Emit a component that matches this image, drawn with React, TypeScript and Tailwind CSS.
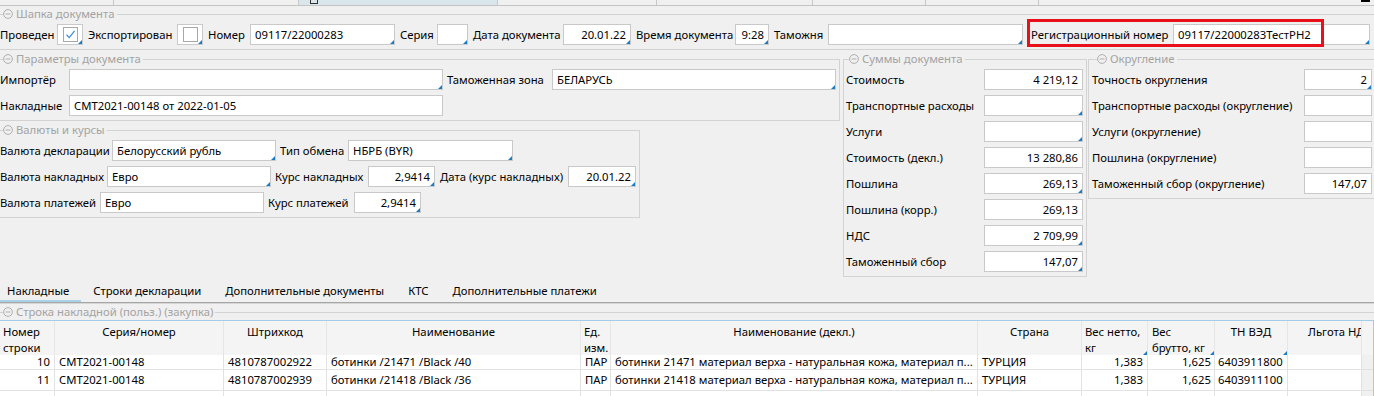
import type { ReactNode } from "react";
import { clsx } from "clsx";

function Corner() {
  return (
    <span
      aria-hidden
      className="absolute bottom-0 right-0 h-0 w-0 border-b-[4px] border-l-[4px] border-b-[#1b7cc4] border-l-transparent"
    />
  );
}

function Field({
  className,
  value,
  right,
  corner,
}: {
  className: string;
  value?: string;
  right?: boolean;
  corner?: boolean;
}) {
  return (
    <div
      className={clsx(
        "relative flex h-[21px] shrink-0 items-center overflow-hidden whitespace-nowrap border border-[#c9c9c9] bg-white",
        right ? "justify-end pr-[4px]" : "pl-[4px]",
        className,
      )}
    >
      {value}
      {corner && <Corner />}
    </div>
  );
}

function Check({ on }: { on?: boolean }) {
  return (
    <div className="relative flex h-[21px] w-[26px] shrink-0 items-center justify-center border border-[#c9c9c9] bg-white">
      <span className="flex h-[15px] w-[15px] items-center justify-center border border-[#a8a8a8] bg-white">
        {on && (
          <svg width="11" height="11" viewBox="0 0 11 11">
            <path d="M1.5 5.8 L4.2 8.6 L9.6 1.8" fill="none" stroke="#3d8fe0" strokeWidth="1.3" />
          </svg>
        )}
      </span>
      <Corner />
    </div>
  );
}

function Lbl({ className, children }: { className?: string; children: ReactNode }) {
  return <span className={clsx("shrink-0 whitespace-nowrap", className)}>{children}</span>;
}

function Legend({ title, className }: { title: string; className?: string }) {
  return (
    <legend className={clsx("pr-[2px] text-[#a3a3a3]", className)}>
      <span className="flex items-center gap-[3px]">
        <svg width="10" height="10" viewBox="0 0 10 10">
          <circle cx="5" cy="5" r="4.4" fill="none" stroke="#a8a8a8" strokeWidth="0.9" />
          <path d="M2.6 5h4.8" stroke="#a8a8a8" strokeWidth="0.9" />
        </svg>
        {title}
      </span>
    </legend>
  );
}

const sums: [string, string, boolean][] = [
  ["Стоимость", "4 219,12", false],
  ["Транспортные расходы", "", true],
  ["Услуги", "", true],
  ["Стоимость (декл.)", "13 280,86", false],
  ["Пошлина", "269,13", true],
  ["Пошлина (корр.)", "269,13", false],
  ["НДС", "2 709,99", true],
  ["Таможенный сбор", "147,07", true],
];

const rounding: [string, string, boolean][] = [
  ["Точность округления", "2", true],
  ["Транспортные расходы (округление)", "", false],
  ["Услуги (округление)", "", false],
  ["Пошлина (округление)", "", false],
  ["Таможенный сбор (округление)", "147,07", false],
];

const topTabs = ["w-[114px]", "w-[185px]", "w-[199px] bg-[#d9e6ec]", "w-[159px]", "w-[156px]", "w-[113px]", "w-[113px]"];

const bottomTabs = ["Накладные", "Строки декларации", "Дополнительные документы", "КТС", "Дополнительные платежи"];

type Col = { w: string; title: string; head: string; cell: string; corner?: boolean };

const cols: Col[] = [
  { w: "w-[55px]", title: "Номер\nстроки", head: "pl-[3px] text-left", cell: "justify-end pr-[4px]" },
  { w: "w-[169px]", title: "Серия/номер", head: "text-center", cell: "pl-[4px]" },
  { w: "w-[103px]", title: "Штрихкод", head: "text-center", cell: "pl-[4px]" },
  { w: "w-[254px]", title: "Наименование", head: "text-center", cell: "pl-[4px]" },
  { w: "w-[30px]", title: "Ед.\nизм.", head: "pl-[3px] text-left", cell: "pl-[4px]" },
  { w: "w-[367px]", title: "Наименование (декл.)", head: "text-center", cell: "pl-[4px]" },
  { w: "w-[104px]", title: "Страна", head: "text-center", cell: "pl-[4px]" },
  { w: "w-[66px]", title: "Вес нетто,\nкг", head: "pl-[3px] text-left", cell: "justify-end pr-[4px]", corner: true },
  { w: "w-[67px]", title: "Вес\nбрутто, кг", head: "pl-[4px] text-left", cell: "justify-end pr-[3px]", corner: true },
  { w: "w-[73px]", title: "ТН ВЭД", head: "text-center", cell: "pl-[3px]", corner: true },
  { w: "w-[74px]", title: "Льгота НДС", head: "pl-[20px] text-left", cell: "bg-[#d4fad4]" },
];

const rows = [
  ["10", "CMT2021-00148", "4810787002922", "ботинки /21471 /Black /40", "ПАР", "ботинки 21471 материал верха - натуральная кожа, материал п...", "ТУРЦИЯ", "1,383", "1,625", "6403911800", ""],
  ["11", "CMT2021-00148", "4810787002939", "ботинки /21418 /Black /36", "ПАР", "ботинки 21418 материал верха - натуральная кожа, материал п...", "ТУРЦИЯ", "1,383", "1,625", "6403911100", ""],
  ["", "", "", "", "", "", "", "", "", "", ""],
];

export default function App() {
  return (
    <div className="relative h-[396px] w-[1374px] overflow-hidden bg-[#f0f0f0] font-['Noto_Sans'] text-[11.3px] leading-[16px] text-black">
      {/* обрезанные вкладки документа */}
      <div className="relative flex h-[6px] border-b border-[#c4c4c4]">
        {topTabs.map((t, i) => (
          <div key={i} className={clsx("relative h-full border-r border-[#c8c8c8]", t)}>
            {i === 2 && <span className="absolute left-[11px] top-[-4px] h-[8px] w-[8px] border border-[#333]" />}
          </div>
        ))}
        <span className="absolute right-[4px] top-0 h-[2px] w-[9px] bg-black" />
      </div>

      <fieldset className="border-y border-[#d3d3d3] pb-[4px]">
        <Legend title="Шапка документа" className="ml-[3px]" />
        <div className="mt-[2px] flex items-center">
          <Lbl className="w-[57px]">Проведен</Lbl>
          <Check on />
          <Lbl className="w-[94px] pl-[5px]">Экспортирован</Lbl>
          <Check />
          <Lbl className="w-[47px] pl-[5px]">Номер</Lbl>
          <Field className="w-[145px]" value="09117/22000283" corner />
          <Lbl className="w-[42px] pl-[5px]">Серия</Lbl>
          <Field className="w-[31px]" corner />
          <Lbl className="w-[95px] pl-[5px]">Дата документа</Lbl>
          <Field className="w-[68px]" value="20.01.22" right corner />
          <Lbl className="w-[104px] pl-[5px]">Время документа</Lbl>
          <Field className="w-[34px]" value="9:28" right corner />
          <Lbl className="w-[59px] pl-[5px]">Таможня</Lbl>
          <Field className="w-[195px]" corner />
          <div className="relative flex items-center">
            <Lbl className="w-[150px] pl-[8px]">Регистрационный номер</Lbl>
            <Field className="w-[197px]" value="09117/22000283ТестРН2" corner />
            <span className="absolute left-[4px] top-[-5px] h-[28px] w-[297px] border-[3px] border-[#e8111b]" />
          </div>
        </div>
      </fieldset>

      <div className="flex items-start">
        <div className="flex w-[840px] shrink-0 flex-col">
          <fieldset className="mt-[1px] border-y border-r border-[#d3d3d3] pb-[4px]">
            <Legend title="Параметры документа" className="ml-[3px]" />
            <div className="mt-[2px] flex flex-col gap-[5px]">
              <div className="flex items-center">
                <Lbl className="w-[69px]">Импортёр</Lbl>
                <Field className="w-[374px]" corner />
                <Lbl className="w-[109px] pl-[4px]">Таможенная зона</Lbl>
                <Field className="w-[284px]" value="БЕЛАРУСЬ" corner />
              </div>
              <div className="flex items-center">
                <Lbl className="w-[69px]">Накладные</Lbl>
                <Field className="w-[374px]" value="CMT2021-00148 от 2022-01-05" />
              </div>
            </div>
          </fieldset>

          <fieldset className="mt-[1px] w-[640px] border-y border-r border-[#d3d3d3] pb-[4px]">
            <Legend title="Валюты и курсы" className="ml-[3px]" />
            <div className="mt-[2px] flex flex-col gap-[5px]">
              <div className="flex items-center">
                <Lbl className="w-[112px]">Валюта декларации</Lbl>
                <Field className="w-[164px]" value="Белорусский рубль" corner />
                <Lbl className="w-[72px] pl-[4px]">Тип обмена</Lbl>
                <Field className="w-[165px]" value="НБРБ (BYR)" corner />
              </div>
              <div className="flex items-center">
                <Lbl className="w-[107px]">Валюта накладных</Lbl>
                <Field className="w-[164px]" value="Евро" corner />
                <Lbl className="w-[97px] pl-[4px]">Курс накладных</Lbl>
                <Field className="w-[67px]" value="2,9414" right corner />
                <Lbl className="w-[133px] pl-[5px]">Дата (курс накладных)</Lbl>
                <Field className="w-[68px]" value="20.01.22" right corner />
              </div>
              <div className="flex items-center">
                <Lbl className="w-[100px]">Валюта платежей</Lbl>
                <Field className="w-[164px]" value="Евро" />
                <Lbl className="w-[90px] pl-[4px]">Курс платежей</Lbl>
                <Field className="w-[67px]" value="2,9414" right corner />
              </div>
            </div>
          </fieldset>
        </div>

        <fieldset className="ml-[3px] mt-[1px] w-[244px] shrink-0 border border-[#d3d3d3] pb-[4px] pl-[2px] pr-[3px]">
          <Legend title="Суммы документа" className="ml-[3px]" />
          <div className="mt-[2px] flex flex-col gap-[5px]">
            {sums.map(([label, value, corner]) => (
              <div key={label} className="flex items-center justify-between">
                <Lbl>{label}</Lbl>
                <Field className="w-[99px]" value={value} right corner={corner} />
              </div>
            ))}
          </div>
        </fieldset>

        <fieldset className="ml-[1px] mt-[1px] w-[288px] shrink-0 border border-[#d3d3d3] pb-[4px] pl-[3px] pr-[3px]">
          <Legend title="Округление" className="ml-[5px]" />
          <div className="mt-[2px] flex flex-col gap-[5px]">
            {rounding.map(([label, value, corner]) => (
              <div key={label} className="flex items-center justify-between">
                <Lbl>{label}</Lbl>
                <Field className="w-[68px]" value={value} right corner={corner} />
              </div>
            ))}
          </div>
        </fieldset>
      </div>

      <div className="mt-[3px] flex">
        {bottomTabs.map((t, i) => (
          <div
            key={t}
            className={clsx(
              "flex h-[22px] items-center border-b-2 pt-[2px] pr-[12px]",
              i === 0 ? "border-[#a9d1e8] pl-[7px]" : "border-transparent pl-[12px]",
            )}
          >
            {t}
          </div>
        ))}
      </div>
      <div className="h-[2px] border-t border-b border-t-[#a6a6a6] border-b-[#d6d6d6]" />

      <fieldset className="border-t border-[#d3d3d3]">
        <Legend title="Строка накладной (польз.) (закупка)" className="ml-[3px]" />
        <div className="border-r border-t border-[#a3cce6]">
          <div className="flex h-[34px] bg-[#f4f4f4]">
            {cols.map((c) => (
              <div
                key={c.title}
                className={clsx("relative shrink-0 overflow-hidden whitespace-pre border-r border-[#e6e6e6] pt-[3px]", c.w, c.head)}
              >
                {c.title}
                {c.corner && <Corner />}
              </div>
            ))}
            <div className="flex-1" />
          </div>
          {rows.map((r, ri) => (
            <div key={ri} className={clsx("flex border-b border-[#e2e2e2]", ri === 0 ? "h-[15px] leading-[14px]" : "h-[21px]")}>
              {cols.map((c, ci) => (
                <div
                  key={ci}
                  className={clsx(
                    "flex shrink-0 items-center overflow-hidden whitespace-nowrap border-r border-[#e2e2e2] bg-white",
                    c.w,
                    c.cell,
                    ri === 2 && ci === 1 && "bg-[#d6d6d6]",
                  )}
                >
                  {r[ci]}
                </div>
              ))}
              <div className="flex-1 bg-[#f0f0f0]" />
            </div>
          ))}
        </div>
      </fieldset>
    </div>
  );
}
